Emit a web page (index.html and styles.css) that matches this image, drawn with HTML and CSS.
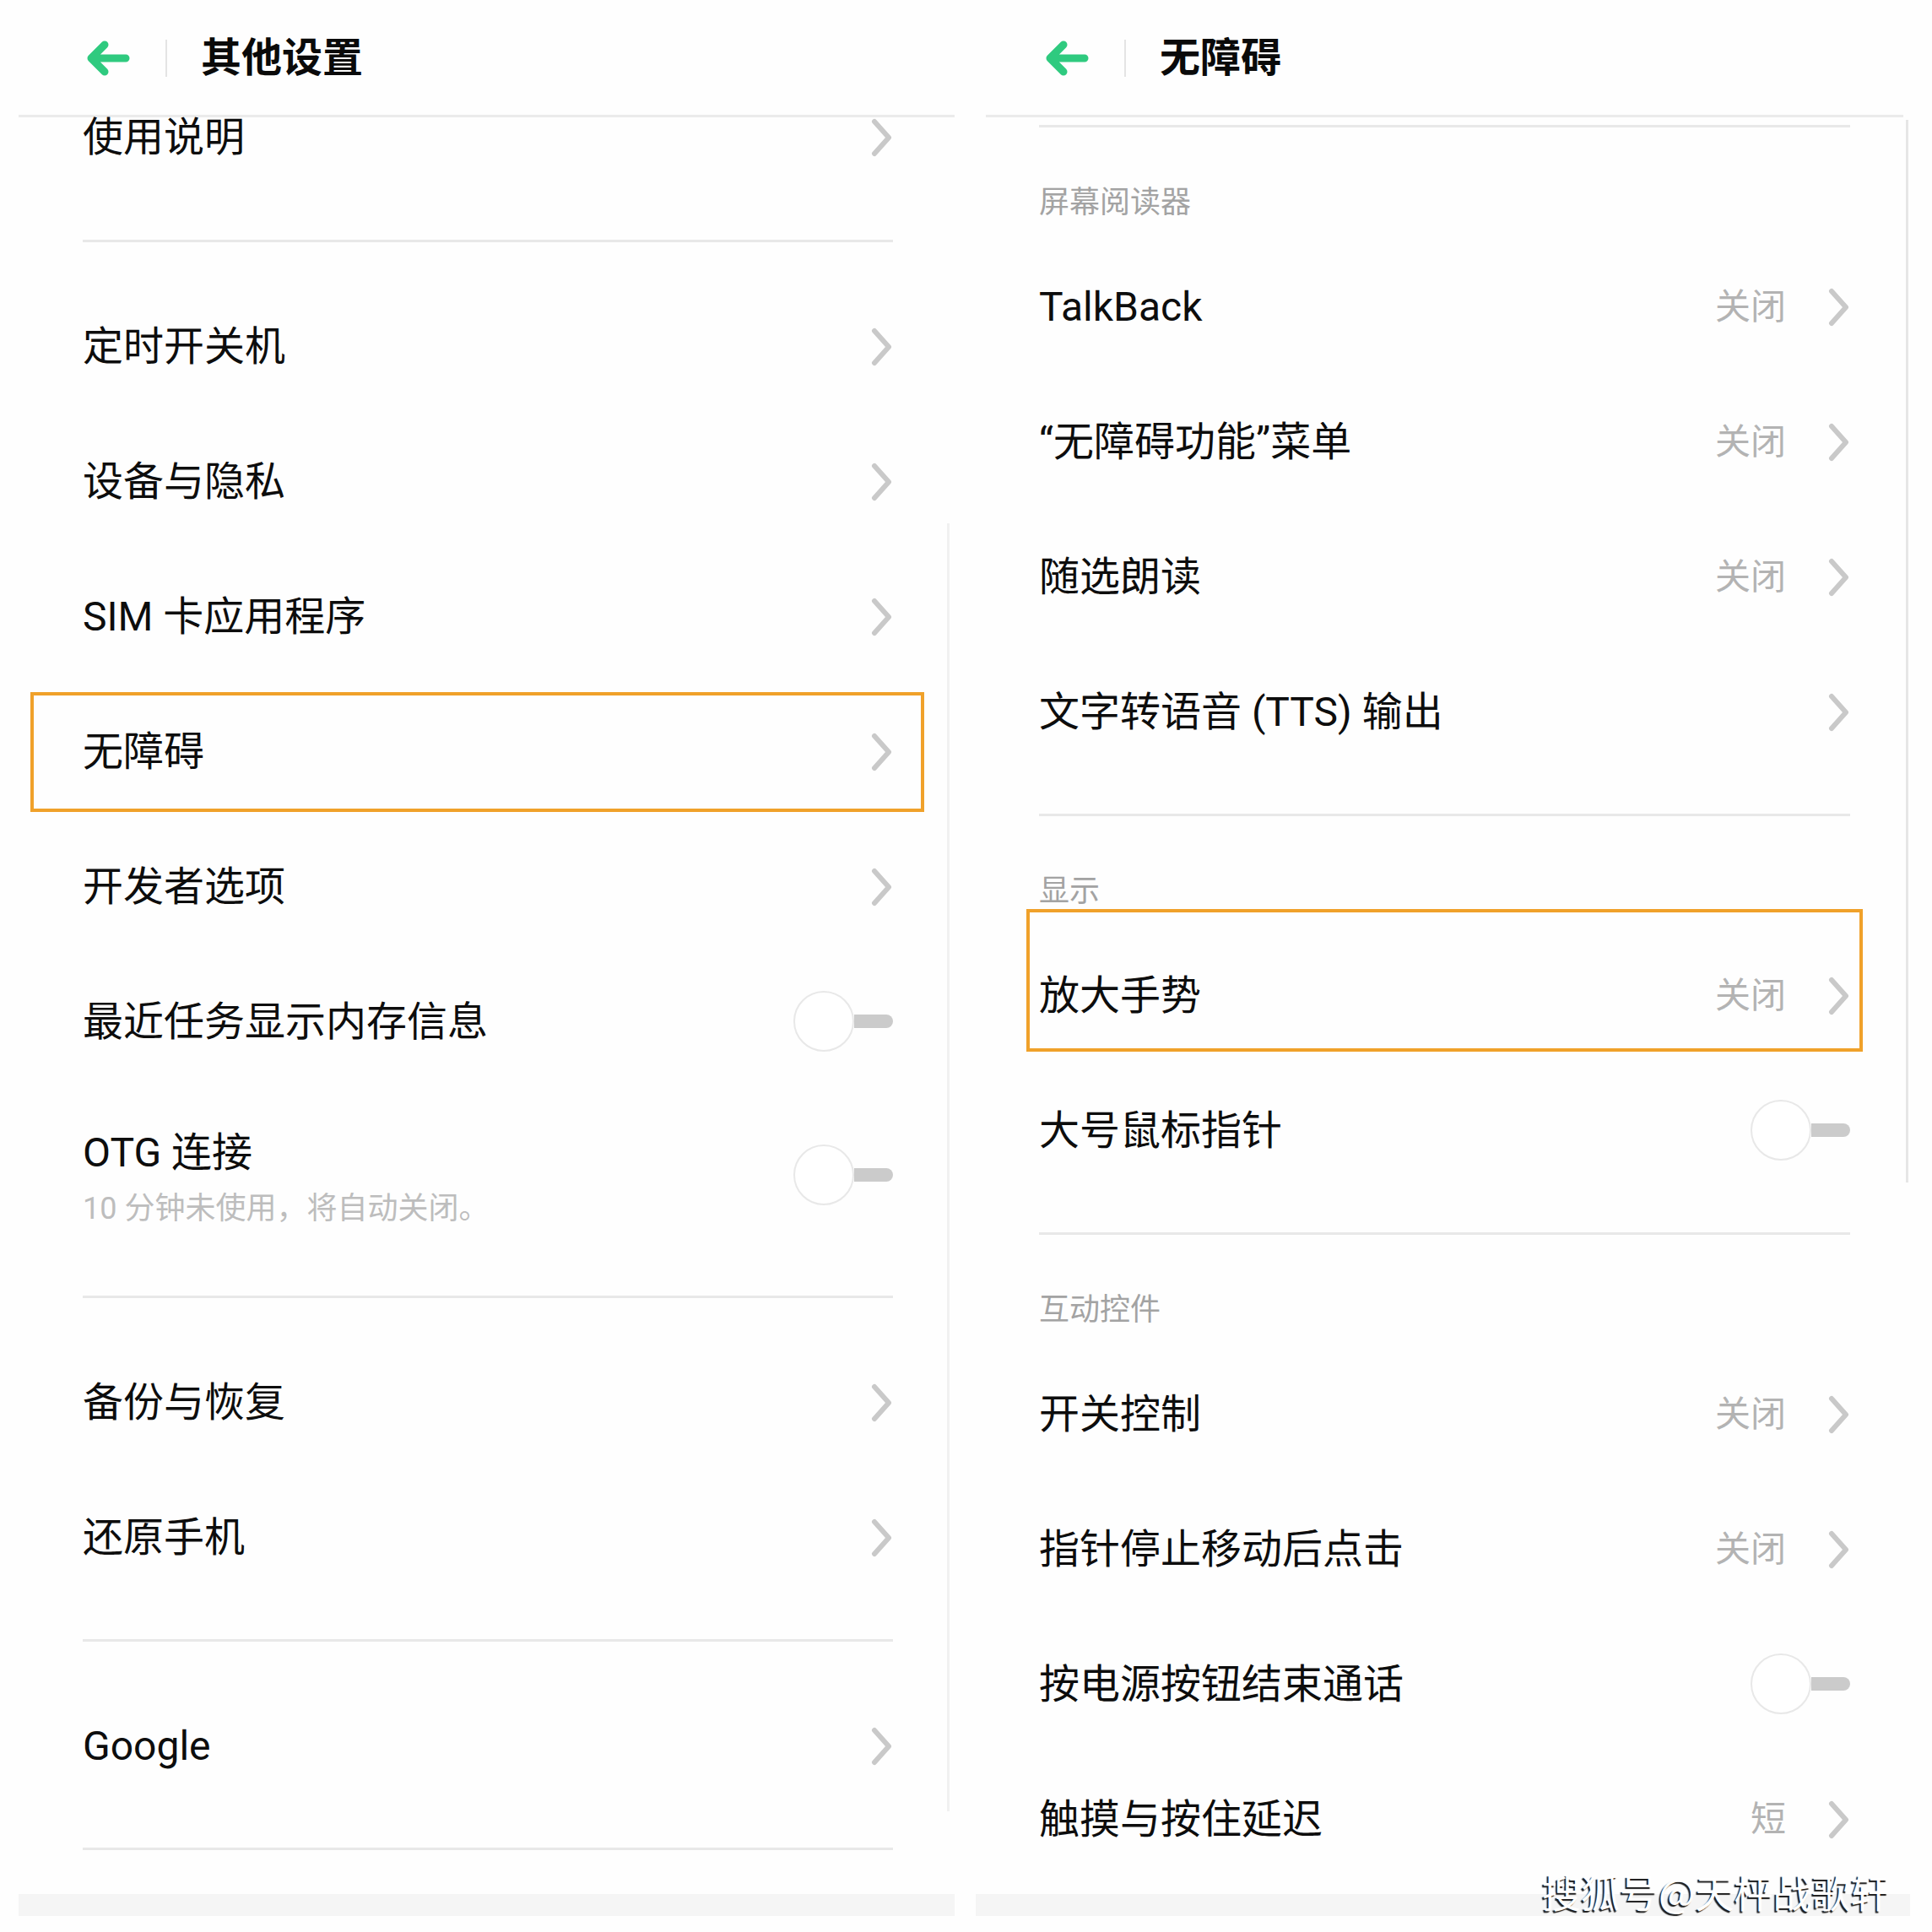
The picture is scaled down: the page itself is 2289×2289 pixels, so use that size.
FILE: index.html
```html
<!DOCTYPE html>
<html lang="zh-CN">
  <head>
    <meta charset="UTF-8" />
    <meta name="viewport" content="width=device-width, initial-scale=1.0" />
    <title>其他设置 / 无障碍</title>
    <link rel="stylesheet" href="styles.css">
  </head>

  <body>
    <div class="screens">
      <!-- 其他设置 -->
      <section class="screen screen-left">
        <header class="bar">
          <svg class="back" width="52" height="42" viewBox="0 0 52 42"><path d="M47 21H7M22 5L6 21L22 37" /></svg>
          <span class="bar-sep"></span>
          <h1 class="bar-title">其他设置</h1>
        </header>

        <div class="list">
          <div class="row row-cut">
            <span class="label">使用说明</span>
            <svg class="chevron" width="26" height="46" viewBox="0 0 26 46"><path d="M4 4L21 23L4 42" /></svg>
          </div>

          <div class="divider"></div>

          <div class="row">
            <span class="label">定时开关机</span>
            <svg class="chevron" width="26" height="46" viewBox="0 0 26 46"><path d="M4 4L21 23L4 42" /></svg>
          </div>
          <div class="row">
            <span class="label">设备与隐私</span>
            <svg class="chevron" width="26" height="46" viewBox="0 0 26 46"><path d="M4 4L21 23L4 42" /></svg>
          </div>
          <div class="row">
            <span class="label">SIM 卡应用程序</span>
            <svg class="chevron" width="26" height="46" viewBox="0 0 26 46"><path d="M4 4L21 23L4 42" /></svg>
          </div>
          <div class="row is-marked">
            <span class="label">无障碍</span>
            <svg class="chevron" width="26" height="46" viewBox="0 0 26 46"><path d="M4 4L21 23L4 42" /></svg>
          </div>
          <div class="row">
            <span class="label">开发者选项</span>
            <svg class="chevron" width="26" height="46" viewBox="0 0 26 46"><path d="M4 4L21 23L4 42" /></svg>
          </div>
          <div class="row">
            <span class="label">最近任务显示内存信息</span>
            <span class="switch"><span class="knob"></span><span class="track"></span></span>
          </div>
          <div class="row row-tall">
            <div class="label-stack">
              <span class="label">OTG 连接</span>
              <span class="hint">10 分钟未使用，将自动关闭。</span>
            </div>
            <span class="switch"><span class="knob"></span><span class="track"></span></span>
          </div>

          <div class="divider"></div>

          <div class="row">
            <span class="label">备份与恢复</span>
            <svg class="chevron" width="26" height="46" viewBox="0 0 26 46"><path d="M4 4L21 23L4 42" /></svg>
          </div>
          <div class="row">
            <span class="label">还原手机</span>
            <svg class="chevron" width="26" height="46" viewBox="0 0 26 46"><path d="M4 4L21 23L4 42" /></svg>
          </div>

          <div class="divider"></div>

          <div class="row">
            <span class="label">Google</span>
            <svg class="chevron" width="26" height="46" viewBox="0 0 26 46"><path d="M4 4L21 23L4 42" /></svg>
          </div>

          <div class="divider"></div>
        </div>

        <div class="home-strip"></div>
      </section>

      <!-- 无障碍 -->
      <section class="screen screen-right">
        <header class="bar">
          <svg class="back" width="52" height="42" viewBox="0 0 52 42"><path d="M47 21H7M22 5L6 21L22 37" /></svg>
          <span class="bar-sep"></span>
          <h1 class="bar-title">无障碍</h1>
        </header>

        <div class="list">
          <div class="divider divider-top"></div>
          <div class="section-title">屏幕阅读器</div>
          <div class="row">
            <span class="label">TalkBack</span>
            <span class="value">关闭</span>
            <svg class="chevron" width="26" height="46" viewBox="0 0 26 46"><path d="M4 4L21 23L4 42" /></svg>
          </div>
          <div class="row">
            <span class="label">“无障碍功能”菜单</span>
            <span class="value">关闭</span>
            <svg class="chevron" width="26" height="46" viewBox="0 0 26 46"><path d="M4 4L21 23L4 42" /></svg>
          </div>
          <div class="row">
            <span class="label">随选朗读</span>
            <span class="value">关闭</span>
            <svg class="chevron" width="26" height="46" viewBox="0 0 26 46"><path d="M4 4L21 23L4 42" /></svg>
          </div>
          <div class="row">
            <span class="label">文字转语音 (TTS) 输出</span>
            <svg class="chevron" width="26" height="46" viewBox="0 0 26 46"><path d="M4 4L21 23L4 42" /></svg>
          </div>

          <div class="divider"></div>
          <div class="section-title">显示</div>
          <div class="row is-marked">
            <span class="label">放大手势</span>
            <span class="value">关闭</span>
            <svg class="chevron" width="26" height="46" viewBox="0 0 26 46"><path d="M4 4L21 23L4 42" /></svg>
          </div>
          <div class="row">
            <span class="label">大号鼠标指针</span>
            <span class="switch"><span class="knob"></span><span class="track"></span></span>
          </div>

          <div class="divider"></div>
          <div class="section-title">互动控件</div>
          <div class="row">
            <span class="label">开关控制</span>
            <span class="value">关闭</span>
            <svg class="chevron" width="26" height="46" viewBox="0 0 26 46"><path d="M4 4L21 23L4 42" /></svg>
          </div>
          <div class="row">
            <span class="label">指针停止移动后点击</span>
            <span class="value">关闭</span>
            <svg class="chevron" width="26" height="46" viewBox="0 0 26 46"><path d="M4 4L21 23L4 42" /></svg>
          </div>
          <div class="row">
            <span class="label">按电源按钮结束通话</span>
            <span class="switch"><span class="knob"></span><span class="track"></span></span>
          </div>
          <div class="row">
            <span class="label">触摸与按住延迟</span>
            <span class="value">短</span>
            <svg class="chevron" width="26" height="46" viewBox="0 0 26 46"><path d="M4 4L21 23L4 42" /></svg>
          </div>
        </div>

        <div class="home-strip"></div>
      </section>

      <div class="watermark">搜狐号@天枰战歌轩</div>
    </div>
  </body>
</html>
```

FILE: styles.css
```css
body {
  margin: 0;
  background: #fefefe;
  font-family: Roboto, "Noto Sans CJK SC", sans-serif;
  color: #111;
}

.screens {
  position: relative;
  display: flex;
  width: 2289px;
  height: 2289px;
  padding-left: 22px;
  box-sizing: border-box;
  overflow: hidden;
}

.screen {
  position: relative;
  display: flex;
  flex-direction: column;
  height: 2270px;
}

.screen-left {
  width: 1109px;
}

.screen-right {
  width: 1100px;
  margin-left: 29px;
}

/* faint scroll edge on the right side of each screen */
.screen::after {
  content: "";
  position: absolute;
  background: #f1f1f1;
  width: 3px;
}

.screen-left::after {
  left: 1100px;
  top: 620px;
  height: 1526px;
}

.screen-right::after {
  left: 1098px;
  top: 142px;
  height: 1259px;
  background: #e6e6e6;
}

/* top bar */
.bar {
  display: flex;
  align-items: center;
  flex-shrink: 0;
  height: 139px;
  padding: 2px 0 0 80px;
  box-sizing: border-box;
  border-bottom: 3px solid #ebebeb;
  background: #fefefe;
}

.screen-right .bar {
  margin: 0 5px 0 8px;
  padding-left: 70px;
}

.back path {
  fill: none;
  stroke: #2fca7f;
  stroke-width: 9;
  stroke-linecap: round;
  stroke-linejoin: round;
}

.bar-sep {
  width: 2px;
  height: 44px;
  margin: 0 40px 0 42px;
  background: #e4e4e4;
}

.bar-title {
  margin: 0;
  font-size: 48px;
  font-weight: 700;
  line-height: 1;
  color: #0a0a0a;
}

/* list */
.list {
  flex: 1;
  padding: 0 73px 0 76px;
}

.screen-right .list {
  padding: 0 68px 0 71px;
}

.row {
  position: relative;
  display: flex;
  align-items: center;
  height: 160px;
}

/* first row is scrolled up, only its lower part shows under the bar */
.row-cut {
  height: 103px;
  align-items: flex-start;
}

.row-cut .label {
  line-height: 40px;
}

.row-cut .chevron {
  margin-top: 1px;
}

.row-tall {
  height: 204px;
}

.label {
  flex: 1;
  padding-top: 4px;
  font-size: 48px;
  line-height: 56px;
  color: #0d0d0d;
  white-space: nowrap;
}

.label-stack {
  flex: 1;
  display: flex;
  flex-direction: column;
  gap: 18px;
  padding-top: 4px;
}

.hint {
  font-size: 36px;
  line-height: 40px;
  color: #bdbdbd;
}

.value {
  margin-right: 50px;
  padding-top: 4px;
  font-size: 42px;
  line-height: 1;
  color: #b3b3b3;
}

.chevron {
  margin-top: 4px;
}

.chevron path {
  fill: none;
  stroke: #c9c9c9;
  stroke-width: 6;
  stroke-linecap: round;
  stroke-linejoin: round;
}

.switch {
  display: flex;
  align-items: center;
  margin-top: 2px;
}

.knob {
  width: 68px;
  height: 68px;
  border: 2px solid #e8e8e8;
  border-radius: 50%;
  background: #fff;
}

.track {
  width: 46px;
  height: 16px;
  border-radius: 0 8px 8px 0;
  background: #cbcbcb;
}

.divider {
  height: 3px;
  margin: 42px 0;
  background: #e8e8e8;
}

.screen-right .divider {
  margin-bottom: 0;
}

.screen-right .divider-top {
  margin-top: 9px;
}

.section-title {
  padding: 67px 0 20px;
  font-size: 36px;
  line-height: 44px;
  color: #a3a3a3;
}

/* orange highlight frames */
.is-marked::after {
  content: "";
  position: absolute;
  border: 4px solid #f0a12a;
  pointer-events: none;
}

.screen-left .is-marked::after {
  left: -62px;
  right: -37px;
  top: 11px;
  bottom: 7px;
}

.screen-right .is-marked::after {
  left: -15px;
  right: -15px;
  top: -21px;
  bottom: 12px;
}

.home-strip {
  flex-shrink: 0;
  height: 26px;
  background: #f5f5f5;
}

.screen-right .home-strip {
  margin: 0 -3px 0 -4px;
}

.watermark {
  position: absolute;
  left: 1827px;
  top: 2212px;
  font-family: "Noto Sans CJK SC", sans-serif;
  font-size: 46px;
  line-height: 56px;
  color: #fff;
  text-shadow: -2px 2px 1px #1c1c1c;
  white-space: nowrap;
}
```
